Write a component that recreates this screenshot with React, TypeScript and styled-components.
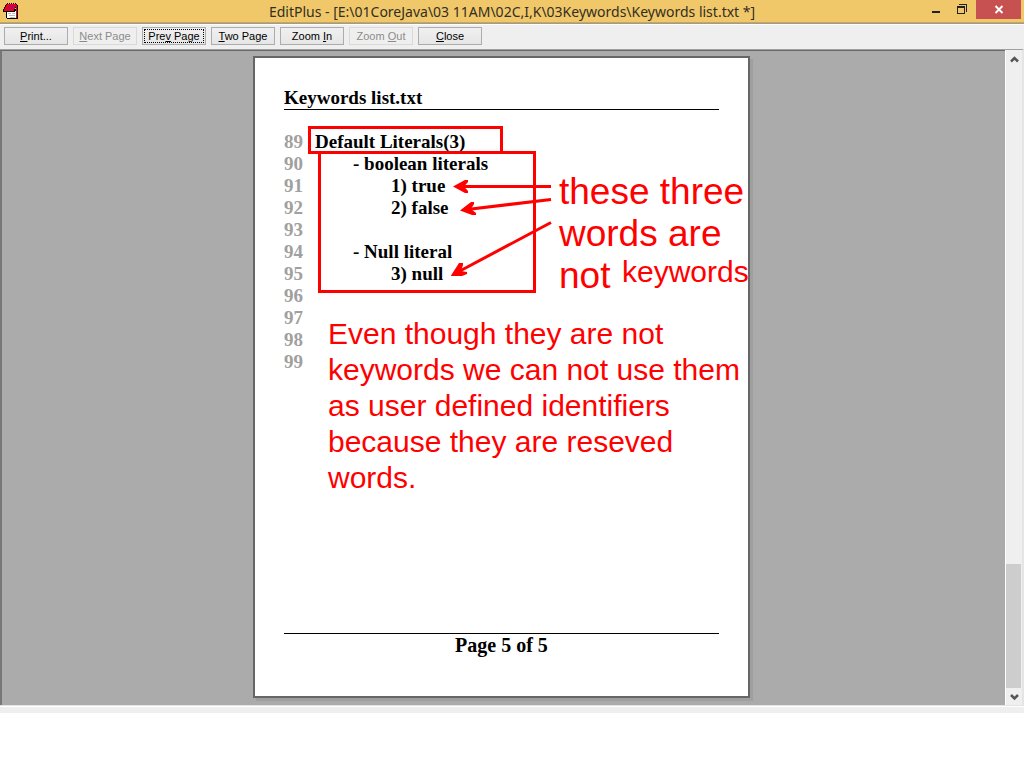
import React from "react";
import styled, { createGlobalStyle } from "styled-components";

const GlobalStyle = createGlobalStyle`
  * { box-sizing: border-box; }
  body { margin: 0; background: #fff; font-family: "Liberation Sans", Arial, sans-serif; }
  button { font: inherit; color: inherit; margin: 0; padding: 0; border: 0; background: none; }
`;

const AppWindow = styled.div`
  display: flex;
  flex-direction: column;
`;

const TitleBar = styled.header`
  display: grid;
  grid-template-columns: 1fr auto 1fr;
  height: 24px;
  background: #f0c869;
  border-bottom: 1px solid #a09a93;
  box-shadow: inset 0 -1px 0 #c8a75b;
`;

const AppIcon = styled.svg`
  display: block;
  width: 16px;
  height: 17px;
  margin: 3px 0 0 3px;
`;

const Title = styled.h1`
  margin: 0;
  font: 400 14px/24px "Noto Sans", "Segoe UI", sans-serif;
  color: #332e24;
  white-space: nowrap;
`;

const WindowControls = styled.div`
  display: flex;
  justify-content: flex-end;
  padding-right: 3px;
`;

const WindowButton = styled.button<{ $close?: boolean }>`
  width: ${(p) => (p.$close ? 45 : 26)}px;
  height: 19px;
  background: ${(p) => (p.$close ? "#c75050" : "transparent")};
  svg { display: block; margin: 0 auto; }
`;

const Toolbar = styled.nav`
  display: flex;
  gap: 5px;
  height: 25px;
  padding: 2px 4px;
  background: #efefef;
  border-top: 1px solid #fff;
`;

const ToolButton = styled.button<{ $focused?: boolean }>`
  width: 64px;
  height: 18px;
  border: 1px solid #acacac;
  background: linear-gradient(#f0f0f0, #e6e6e6);
  font-size: 11px;
  line-height: 16px;
  color: #000;
  text-align: center;
  outline: ${(p) => (p.$focused ? "1px dotted #000" : "none")};
  outline-offset: -3px;
  &:disabled { color: #8c8c8c; background: #efefef; border-color: #d9d9d9; }
  u { text-underline-offset: 1px; }
`;

const Preview = styled.main`
  display: flex;
  border-top: 1px solid #a0a0a0;
  border-right: 2px solid #e5e5e5;
  border-bottom: 1px solid #e3e3e3;
  background: #ababab;
`;

const Canvas = styled.div`
  flex: 1;
  display: flex;
  justify-content: center;
  padding: 5px 6px 7px 2px;
  border-top: 1px solid #696969;
  border-left: 2px solid #777;
`;

const Sheet = styled.article`
  position: relative;
  display: flex;
  flex-direction: column;
  width: 497px;
  min-height: 642px;
  padding: 30px 29px 40px;
  border: 2px solid #666;
  background: #fff;
  box-shadow: 3px 3px 0 #9f9f9f;
  font: 700 19px/22px "Liberation Serif", "Times New Roman", serif;
  color: #000;
`;

const SheetHeader = styled.header`
  padding-bottom: 1px;
  border-bottom: 1px solid #000;
  line-height: 20px;
`;

const Listing = styled.ol`
  flex: 1;
  margin: 0;
  padding: 21px 0 0;
  list-style: none;
`;

const Line = styled.li`
  display: flex;
  height: 22px;
`;

const LineNumber = styled.span`
  width: 31px;
  color: #a0a0a0;
`;

const Code = styled.span<{ $depth: number }>`
  padding-left: ${(p) => p.$depth * 38}px;
  white-space: pre;
`;

const SheetFooter = styled.footer`
  border-top: 1px solid #000;
  font-size: 20px;
  line-height: 22px;
  text-align: center;
`;

/* Red mark-up laid over the printed sheet */
const Frame = styled.div<{ $x: number; $y: number; $w: number; $h: number }>`
  position: absolute;
  left: ${(p) => p.$x}px;
  top: ${(p) => p.$y}px;
  width: ${(p) => p.$w}px;
  height: ${(p) => p.$h}px;
  border: 3px solid #f00;
`;

const Arrows = styled.svg`
  position: absolute;
  left: 195px;
  top: 120px;
  width: 102px;
  height: 102px;
`;

const Note = styled.p<{ $x: number; $y: number; $size: number; $leading: number }>`
  position: absolute;
  left: ${(p) => p.$x}px;
  top: ${(p) => p.$y}px;
  margin: 0;
  color: #f00;
  font: 400 ${(p) => p.$size}px/${(p) => p.$leading}px "Liberation Sans", Arial, sans-serif;
  white-space: nowrap;
`;

const Scrollbar = styled.div`
  display: flex;
  flex-direction: column;
  width: 17px;
  padding-right: 1px;
  background: #efefef;
  border-left: 1px solid #fff;
`;

const ScrollButton = styled.button`
  height: 17px;
  svg { display: block; margin: 0 auto; }
`;

const Track = styled.div`
  flex: 1;
  display: flex;
  flex-direction: column;
  justify-content: flex-end;
`;

const Thumb = styled.div`
  height: 124px;
  background: #cdcdcd;
`;

const StatusBar = styled.footer`
  height: 7px;
  background: #efefef;
  border-top: 1px solid #fff;
`;

const lines: { depth: number; text: string }[] = [
  { depth: 0, text: "Default Literals(3)" },
  { depth: 1, text: "- boolean literals" },
  { depth: 2, text: "1) true" },
  { depth: 2, text: "2) false" },
  { depth: 0, text: "" },
  { depth: 1, text: "- Null literal" },
  { depth: 2, text: "3) null" },
  { depth: 0, text: "" },
  { depth: 0, text: "" },
  { depth: 0, text: "" },
  { depth: 0, text: "" },
];

export default function App() {
  return (
    <AppWindow>
      <GlobalStyle />
      <TitleBar>
        <AppIcon viewBox="0 0 16 17" shapeRendering="crispEdges" aria-hidden="true">
          <path d="M3 6h12v10H4v-1H3z" fill="#000" />
          <path d="M4 8h9v7H4z" fill="#fff" />
          <path d="M5 10h3v1H5zM9 10h3v1H9zM6 12h6v1H6zM7 14h5v1H7z" fill="#bbb" />
          <path d="M13 2h1v13h-1z" fill="#e00018" />
          <path d="M14 2h1v13h-1z" fill="#000" />
          <path d="M3 1h11v1h-1v3h-1v4H0V6h1V4h1V2h1z" fill="#000" />
          <path d="M4 1h9v3h-1v2h-1v2H1V6h1V4h1V2h1z" fill="#f00018" />
          <path d="M5 3h1v1H5zM7 3h1v1H7zM9 3h1v1H9zM11 3h1v1h-1zM4 5h1v1H4zM6 5h1v1H6zM8 5h1v1H8zM10 5h1v1h-1zM6 2h1v1H6zM8 2h1v1H8zM10 2h1v1h-1zM5 4h1v1H5zM7 4h1v1H7zM9 4h1v1H9z" fill="#8c1090" />
          <path d="M4 0h1v1H4zM6 0h1v1H6zM8 0h1v1H8zM10 0h1v1h-1zM12 0h1v1h-1z" fill="#000" />
        </AppIcon>
        <Title>EditPlus - [E:\01CoreJava\03 11AM\02C,I,K\03Keywords\Keywords list.txt *]</Title>
        <WindowControls>
          <WindowButton aria-label="Minimize">
            <svg width="26" height="19" shapeRendering="crispEdges"><path d="M8 11h8v2H8z" fill="#222" /></svg>
          </WindowButton>
          <WindowButton aria-label="Restore">
            <svg width="26" height="19" shapeRendering="crispEdges">
              <path d="M7 6h8v8H7zM8 8v5h6V8zM9 4h8v8h-1V5H9z" fill="#222" fillRule="evenodd" />
            </svg>
          </WindowButton>
          <WindowButton $close aria-label="Close window">
            <svg width="45" height="19"><path d="M19.500 6l7 7M26.500 6l-7 7" stroke="#fff" strokeWidth="2" /></svg>
          </WindowButton>
        </WindowControls>
      </TitleBar>

      <Toolbar>
        <ToolButton><u>P</u>rint...</ToolButton>
        <ToolButton disabled><u>N</u>ext Page</ToolButton>
        <ToolButton $focused>Pre<u>v</u> Page</ToolButton>
        <ToolButton><u>T</u>wo Page</ToolButton>
        <ToolButton>Zoom <u>I</u>n</ToolButton>
        <ToolButton disabled>Zoom <u>O</u>ut</ToolButton>
        <ToolButton><u>C</u>lose</ToolButton>
      </Toolbar>

      <Preview>
        <Canvas>
          <Sheet>
            <SheetHeader>Keywords list.txt</SheetHeader>
            <Listing>
              {lines.map((line, i) => (
                <Line key={i}>
                  <LineNumber>{89 + i}</LineNumber>
                  <Code $depth={line.depth}>{line.text}</Code>
                </Line>
              ))}
            </Listing>
            <SheetFooter>Page 5 of 5</SheetFooter>

            <Frame $x={53} $y={68} $w={195} $h={28} />
            <Frame $x={63} $y={93} $w={218} $h={142} />
            <Arrows viewBox="450 178 102 102" aria-hidden="true">
              <g fill="none" stroke="#f00" strokeWidth="3">
                <path d="M551 186.500H460" />
                <path d="M551 199.500L467 209.500" />
                <path d="M551 222.500L458 272" />
              </g>
              <g fill="#f00">
                <path d="M453 186.500L465 180h3v2l-4 4.500 4 4.500v2h-3z" />
                <path d="M460 210.500L471 202h3v2l-3 5 5 4v2h-4z" />
                <path d="M451 275.500L459 263h4v2l-2 6 6 1v2l-5 2h-11z" />
              </g>
            </Arrows>
            <Note $x={304} $y={113} $size={37} $leading={42}>
              these three<br />words are<br />not
            </Note>
            <Note $x={367} $y={196} $size={30} $leading={36}>keywords</Note>
            <Note $x={73} $y={258} $size={30} $leading={36}>
              Even though they are not<br />
              keywords we can not use them<br />
              as user defined identifiers<br />
              because they are reseved<br />
              words.
            </Note>
          </Sheet>
        </Canvas>
        <Scrollbar>
          <ScrollButton aria-label="Scroll up">
            <svg width="14" height="17"><path d="M4 11.500l3.500-3.500L11 11.500" fill="none" stroke="#555" strokeWidth="2.500" /></svg>
          </ScrollButton>
          <Track><Thumb /></Track>
          <ScrollButton aria-label="Scroll down">
            <svg width="14" height="17"><path d="M4 7l3.500 3.500L11 7" fill="none" stroke="#555" strokeWidth="2.500" /></svg>
          </ScrollButton>
        </Scrollbar>
      </Preview>
      <StatusBar />
    </AppWindow>
  );
}
